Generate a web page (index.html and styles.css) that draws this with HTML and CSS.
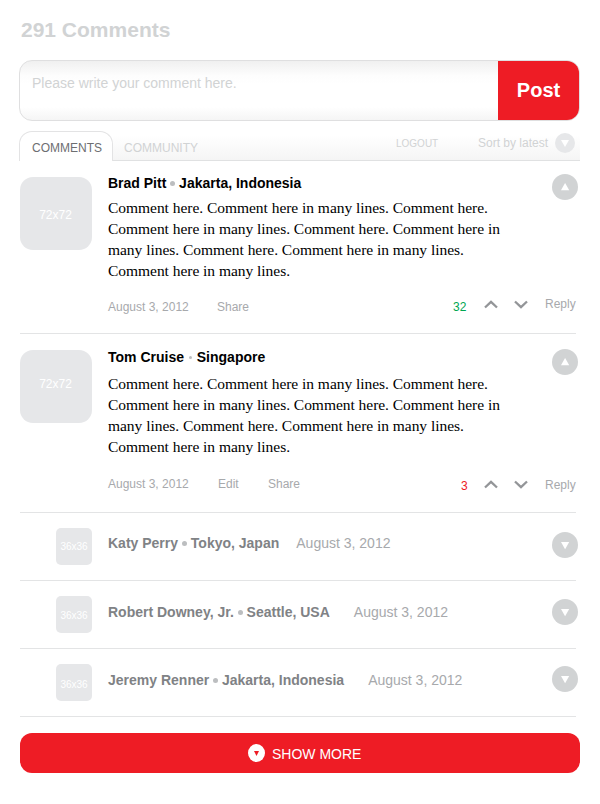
FILE: index.html
```html
<!DOCTYPE html>
<html lang="en">
<head>
<meta charset="utf-8">
<title>Comments</title>
<link rel="stylesheet" href="styles.css">
</head>
<body>
<main class="page">
  <h1 class="title">291 Comments</h1>

  <div class="composer">
    <div class="composer-input">Please write your comment here.</div>
    <div class="post">Post</div>
  </div>

  <nav class="tabs">
    <span class="tab-active">COMMENTS</span>
    <div class="tab-bar">
      <span class="tab">COMMUNITY</span>
      <span class="logout">LOGOUT</span>
      <span class="sort">Sort by latest</span>
      <svg class="sort-icon" viewBox="0 0 20 20"><circle cx="10" cy="10" r="10" fill="#e6e7e9"/><path d="M6 7h8l-4 7z" fill="#fff"/></svg>
    </div>
  </nav>

  <section class="list">
    <article class="comment first">
      <div class="avatar">72x72</div>
      <div class="body">
        <h2 class="name">Brad Pitt <i class="dot"></i> Jakarta, Indonesia</h2>
        <p class="text">Comment here. Comment here in many lines. Comment here.<br>Comment here in many lines. Comment here. Comment here in<br>many lines. Comment here. Comment here in many lines.<br>Comment here in many lines.</p>
        <div class="meta">
          <span class="date">August 3, 2012</span>
          <span class="link">Share</span>
          <div class="votes">
            <span class="score up">32</span>
            <svg class="chev" viewBox="0 0 14 9"><path d="M1 7.5 7 1.8l6 5.7" /></svg>
            <svg class="chev" viewBox="0 0 14 9"><path d="M1 1.5l6 5.7 6-5.7" /></svg>
            <span class="reply">Reply</span>
          </div>
        </div>
      </div>
      <svg class="toggle" viewBox="0 0 26 26"><circle cx="13" cy="13" r="13"/><path d="M9 16.3h8.2L13.1 9z"/></svg>
    </article>

    <article class="comment second">
      <div class="avatar">72x72</div>
      <div class="body">
        <h2 class="name">Tom Cruise <i class="dot small"></i> Singapore</h2>
        <p class="text">Comment here. Comment here in many lines. Comment here.<br>Comment here in many lines. Comment here. Comment here in<br>many lines. Comment here. Comment here in many lines.<br>Comment here in many lines.</p>
        <div class="meta">
          <span class="date">August 3, 2012</span>
          <span class="link edit">Edit</span>
          <span class="link">Share</span>
          <div class="votes">
            <span class="score down">3</span>
            <svg class="chev" viewBox="0 0 14 9"><path d="M1 7.5 7 1.8l6 5.7" /></svg>
            <svg class="chev" viewBox="0 0 14 9"><path d="M1 1.5l6 5.7 6-5.7" /></svg>
            <span class="reply">Reply</span>
          </div>
        </div>
      </div>
      <svg class="toggle" viewBox="0 0 26 26"><circle cx="13" cy="13" r="13"/><path d="M9 16.3h8.2L13.1 9z"/></svg>
    </article>

    <article class="collapsed katy">
      <div class="thumb">36x36</div>
      <h2 class="name">Katy Perry <i class="dot"></i> Tokyo, Japan</h2>
      <span class="when">August 3, 2012</span>
      <svg class="toggle" viewBox="0 0 26 26"><circle cx="13" cy="13" r="13"/><path d="M9 10h8.2l-4.1 7.3z"/></svg>
    </article>
    <article class="collapsed robert">
      <div class="thumb">36x36</div>
      <h2 class="name">Robert Downey, Jr. <i class="dot"></i> Seattle, USA</h2>
      <span class="when">August 3, 2012</span>
      <svg class="toggle" viewBox="0 0 26 26"><circle cx="13" cy="13" r="13"/><path d="M9 10h8.2l-4.1 7.3z"/></svg>
    </article>
    <article class="collapsed jeremy">
      <div class="thumb">36x36</div>
      <h2 class="name">Jeremy Renner <i class="dot"></i> Jakarta, Indonesia</h2>
      <span class="when">August 3, 2012</span>
      <svg class="toggle" viewBox="0 0 26 26"><circle cx="13" cy="13" r="13"/><path d="M9 10h8.2l-4.1 7.3z"/></svg>
    </article>
  </section>

  <div class="more">
    <svg class="more-icon" viewBox="0 0 17 18"><ellipse cx="8.5" cy="9" rx="8.5" ry="9" fill="#fff"/><path d="M6 7h5l-2.5 5z" fill="#ee1c25"/></svg>
    <span class="more-label">SHOW MORE</span>
  </div>
</main>
</body>
</html>
```
FILE: styles.css
```css
* { box-sizing: border-box; }
body {
  margin: 0;
  background: #fff;
  font-family: "Liberation Sans", Arial, sans-serif;
  white-space: nowrap;
}
.page { width: 600px; height: 804px; overflow: hidden; }
h1, h2, p { margin: 0; }
svg { display: block; flex: none; }

.title {
  height: 60px;
  padding: 18px 0 0 21px;
  font-size: 21px;
  line-height: 24px;
  color: #d1d3d4;
}

.composer {
  display: flex;
  width: 561px;
  height: 61px;
  margin-left: 19px;
  border: 1px solid #dfdfe0;
  border-radius: 13px;
  overflow: hidden;
  background: linear-gradient(#f0f0f0, #fdfdfd 25%, #fff 40%, #fff 78%, #f5f5f5);
}
.composer-input {
  flex: 1;
  padding: 14px 0 0 12px;
  font-size: 14px;
  line-height: 16px;
  color: #d1d3d4;
}
.post {
  width: 81px;
  background: #ee1c25;
  color: #fff;
  font-size: 20px;
  font-weight: bold;
  line-height: 58px;
  text-align: center;
}

.tabs { display: flex; height: 30px; margin: 10px 20px 0 19px; }
.tab-active {
  width: 94px;
  border: 1px solid #e3e3e4;
  border-bottom: 0;
  border-radius: 13px 13px 0 0;
  padding-left: 12px;
  font-size: 12px;
  line-height: 32px;
  color: #6d6e71;
}
.tab-bar {
  flex: 1;
  display: flex;
  border-bottom: 1px solid #e0e1e2;
  background: linear-gradient(#fff 15%, #f5f5f5);
  color: #d1d3d4;
  font-size: 12px;
  line-height: 34px;
}
.tab { margin-left: 11px; flex: 1; }
.logout { width: 82px; font-size: 10px; line-height: 25px; }
.sort { width: 77px; line-height: 24px; }
.sort-icon { width: 20px; height: 20px; margin: 2px 5px 0 0; }

.list { width: 556px; margin-left: 20px; }
.comment { display: flex; border-bottom: 1px solid #e3e4e5; }
.first { height: 173px; }
.second { height: 179px; }
.avatar {
  flex: none;
  width: 72px;
  height: 73px;
  margin-top: 16px;
  border-radius: 13px;
  background: #e6e7e9;
  color: #fff;
  font-size: 12px;
  line-height: 76px;
  text-align: center;
  padding-right: 1px;
}
.second .avatar { line-height: 68px; }
.body { flex: none; width: 484px; margin-right: -24px; padding: 14px 0 0 16px; }
.name { font-size: 14px; line-height: 16px; color: #000; }
.dot {
  display: inline-block;
  width: 5px;
  height: 5px;
  border-radius: 50%;
  background: #bcbec0;
  vertical-align: 2px;
}
.dot.small { width: 3px; height: 3px; margin: 0 1px; vertical-align: 3px; }
.text {
  margin-top: 6px;
  font-family: "Liberation Serif", "Times New Roman", serif;
  font-size: 15.5px;
  letter-spacing: -0.035px;
  line-height: 21px;
  color: #000;
}
.second .body { padding-top: 15px; }
.second .text { margin-top: 8px; }
.meta {
  display: flex;
  margin-top: 18px;
  font-size: 12px;
  line-height: 16px;
  color: #a7a9ac;
}
.second .meta { margin-top: 19px; }
.date { width: 109px; }
.edit { width: 50px; }
.second .date { width: 110px; }
.votes { display: flex; margin-left: auto; }
.score { width: 31px; }
.second .score { width: 23px; padding-top: 2px; }
.up { color: #00a651; }
.down { color: #ed1c24; }
.chev {
  width: 14px;
  height: 9px;
  margin: 1px 16px 0 0;
  fill: none;
  stroke: #939598;
  stroke-width: 2.3;
}
.reply { width: 31px; margin: -3px 0 0 1px; }
.second .chev { margin-top: 4px; }
.second .reply { margin-top: 1px; }
.toggle { width: 26px; height: 26px; margin: 13px -2px 0 auto; }
.toggle circle { fill: #d1d3d4; }
.toggle path { fill: #fff; }
.comment .toggle { margin-left: 0; }
.second .toggle { margin-top: 15px; }

.collapsed {
  display: flex;
  height: 68px;
  padding-left: 36px;
  border-bottom: 1px solid #e3e4e5;
}
.thumb {
  width: 36px;
  height: 37px;
  margin: 15px 16px 0 0;
  border-radius: 5px;
  background: #e6e7e9;
  color: #fff;
  font-size: 10px;
  line-height: 38px;
  text-align: center;
}
.collapsed .name { margin-top: 23px; color: #808285; }
.when { margin: 23px 0 0 17px; font-size: 14px; line-height: 16px; color: #a7a9ac; }
.katy .name, .katy .when { margin-top: 22px; }
.katy .toggle { margin-top: 19px; }
.robert .toggle { margin-top: 18px; }
.jeremy .toggle { margin-top: 17px; }
.robert .when { margin-left: 24px; }
.jeremy .when { margin-left: 24px; }
.robert .thumb { line-height: 39px; }
.jeremy .thumb { line-height: 41px; }

.more {
  display: flex;
  align-items: center;
  width: 560px;
  height: 40px;
  margin: 16px 0 0 20px;
  padding-left: 228px;
  border-radius: 12px;
  background: #ee1c25;
  color: #fff;
  font-size: 14px;
}
.more-icon { width: 17px; height: 18px; margin-right: 7px; }
.more-label { padding-top: 2px; }
```
